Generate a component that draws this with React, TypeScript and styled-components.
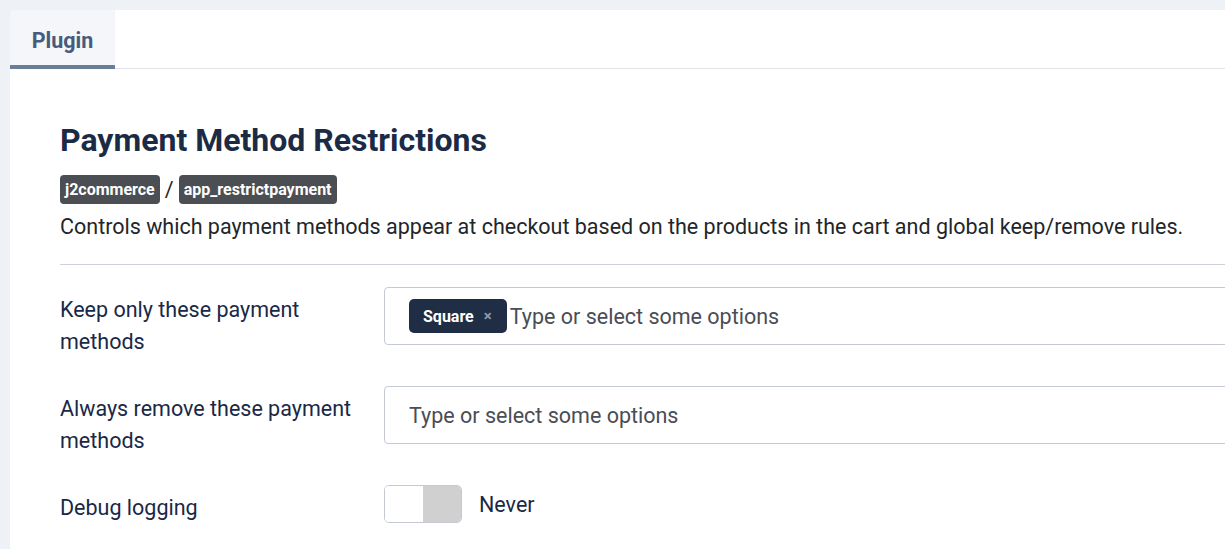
import styled, { createGlobalStyle } from "styled-components"

const GlobalStyle = createGlobalStyle`
  html, body {
    margin: 0;
    padding: 0;
    background: #eef1f6;
    font-family: Roboto, "Liberation Sans", Arial, sans-serif;
    overflow: hidden;
  }
  * {
    box-sizing: border-box;
  }
`

const Page = styled.div`
  padding: 10px 0 0 10px;
  width: 1225px;
  height: 549px;
`

const Card = styled.div`
  background: #fff;
  border-top-left-radius: 4px;
  width: 1260px;
  height: 600px;
`

const TabBar = styled.div`
  display: flex;
  border-bottom: 1px solid #dfe3e8;
`

const Tab = styled.div<{ $active?: boolean }>`
  width: 105px;
  height: 59px;
  padding-top: 18px;
  text-align: center;
  font-size: 21.5px;
  font-weight: 700;
  color: #485b7c;
  background: ${(p) => (p.$active ? "#f4f6f9" : "transparent")};
  border-bottom: 4px solid ${(p) => (p.$active ? "#6b7e99" : "transparent")};
  border-top-left-radius: 4px;
  margin-bottom: -1px;
`

const Body = styled.div`
  padding: 52px 0 0 50px;
`

const Heading = styled.h1`
  margin: 0;
  font-size: 32px;
  line-height: 38px;
  font-weight: 700;
  color: #1c2b45;
`

const BadgeRow = styled.div`
  display: flex;
  align-items: center;
  gap: 5px;
  margin-top: 16px;
  font-size: 21.5px;
  color: #22262a;
`

const Badge = styled.span`
  display: inline-block;
  background: #4b4f54;
  color: #fff;
  font-size: 16px;
  font-weight: 700;
  line-height: 29px;
  padding: 0 5px;
  border-radius: 4px;
`

const Description = styled.p`
  margin: 8px 0 0;
  font-size: 21.5px;
  line-height: 30px;
  color: #22262a;
`

const Divider = styled.hr`
  margin: 22px 0 22px;
  border: 0;
  border-top: 1px solid #cdd1d8;
`

const FieldRow = styled.div`
  display: grid;
  grid-template-columns: 324px 1fr;
  align-items: start;
  margin-bottom: 28px;
`

const Label = styled.label`
  padding-top: 7px;
  font-size: 21.5px;
  line-height: 32px;
  color: #1a2847;
`

const MultiSelect = styled.div`
  height: 58px;
  display: flex;
  align-items: center;
  gap: 3px;
  padding: 0 24px;
  border: 1px solid #c5c9d3;
  border-radius: 4px;
  font-size: 21.5px;
  color: #4a4d55;
`

const Chip = styled.span`
  display: inline-flex;
  align-items: center;
  gap: 10px;
  height: 34px;
  padding: 0 15px 0 14px;
  background: #1f2d45;
  color: #fff;
  border-radius: 5px;
  font-size: 16px;
  font-weight: 700;
`

const ChipClose = styled.span`
  color: #8f98a8;
  font-size: 15px;
  font-weight: 700;
`

const SwitchRow = styled.div`
  display: flex;
  align-items: center;
  gap: 17px;
  font-size: 21.5px;
  color: #1a2847;
`

const Switch = styled.div`
  display: flex;
  width: 78px;
  height: 38px;
  border: 1px solid #c5c9d3;
  border-radius: 5px;
  overflow: hidden;
`

const SwitchHalf = styled.span<{ $on?: boolean }>`
  flex: 1;
  background: ${(p) => (p.$on ? "#d0d0d0" : "#fff")};
`

export default function App() {
  return (
    <Page>
      <GlobalStyle />
      <Card>
        <TabBar>
          <Tab $active>Plugin</Tab>
        </TabBar>
        <Body>
          <Heading>Payment Method Restrictions</Heading>
          <BadgeRow>
            <Badge>j2commerce</Badge>/<Badge>app_restrictpayment</Badge>
          </BadgeRow>
          <Description>
            Controls which payment methods appear at checkout based on the products in the cart and global keep/remove rules.
          </Description>
          <Divider />
          <FieldRow>
            <Label>Keep only these payment<br />methods</Label>
            <MultiSelect>
              <Chip>
                Square <ChipClose>×</ChipClose>
              </Chip>
              Type or select some options
            </MultiSelect>
          </FieldRow>
          <FieldRow>
            <Label>Always remove these payment<br />methods</Label>
            <MultiSelect>Type or select some options</MultiSelect>
          </FieldRow>
          <FieldRow>
            <Label>Debug logging</Label>
            <SwitchRow>
              <Switch>
                <SwitchHalf />
                <SwitchHalf $on />
              </Switch>
              Never
            </SwitchRow>
          </FieldRow>
        </Body>
      </Card>
    </Page>
  )
}
